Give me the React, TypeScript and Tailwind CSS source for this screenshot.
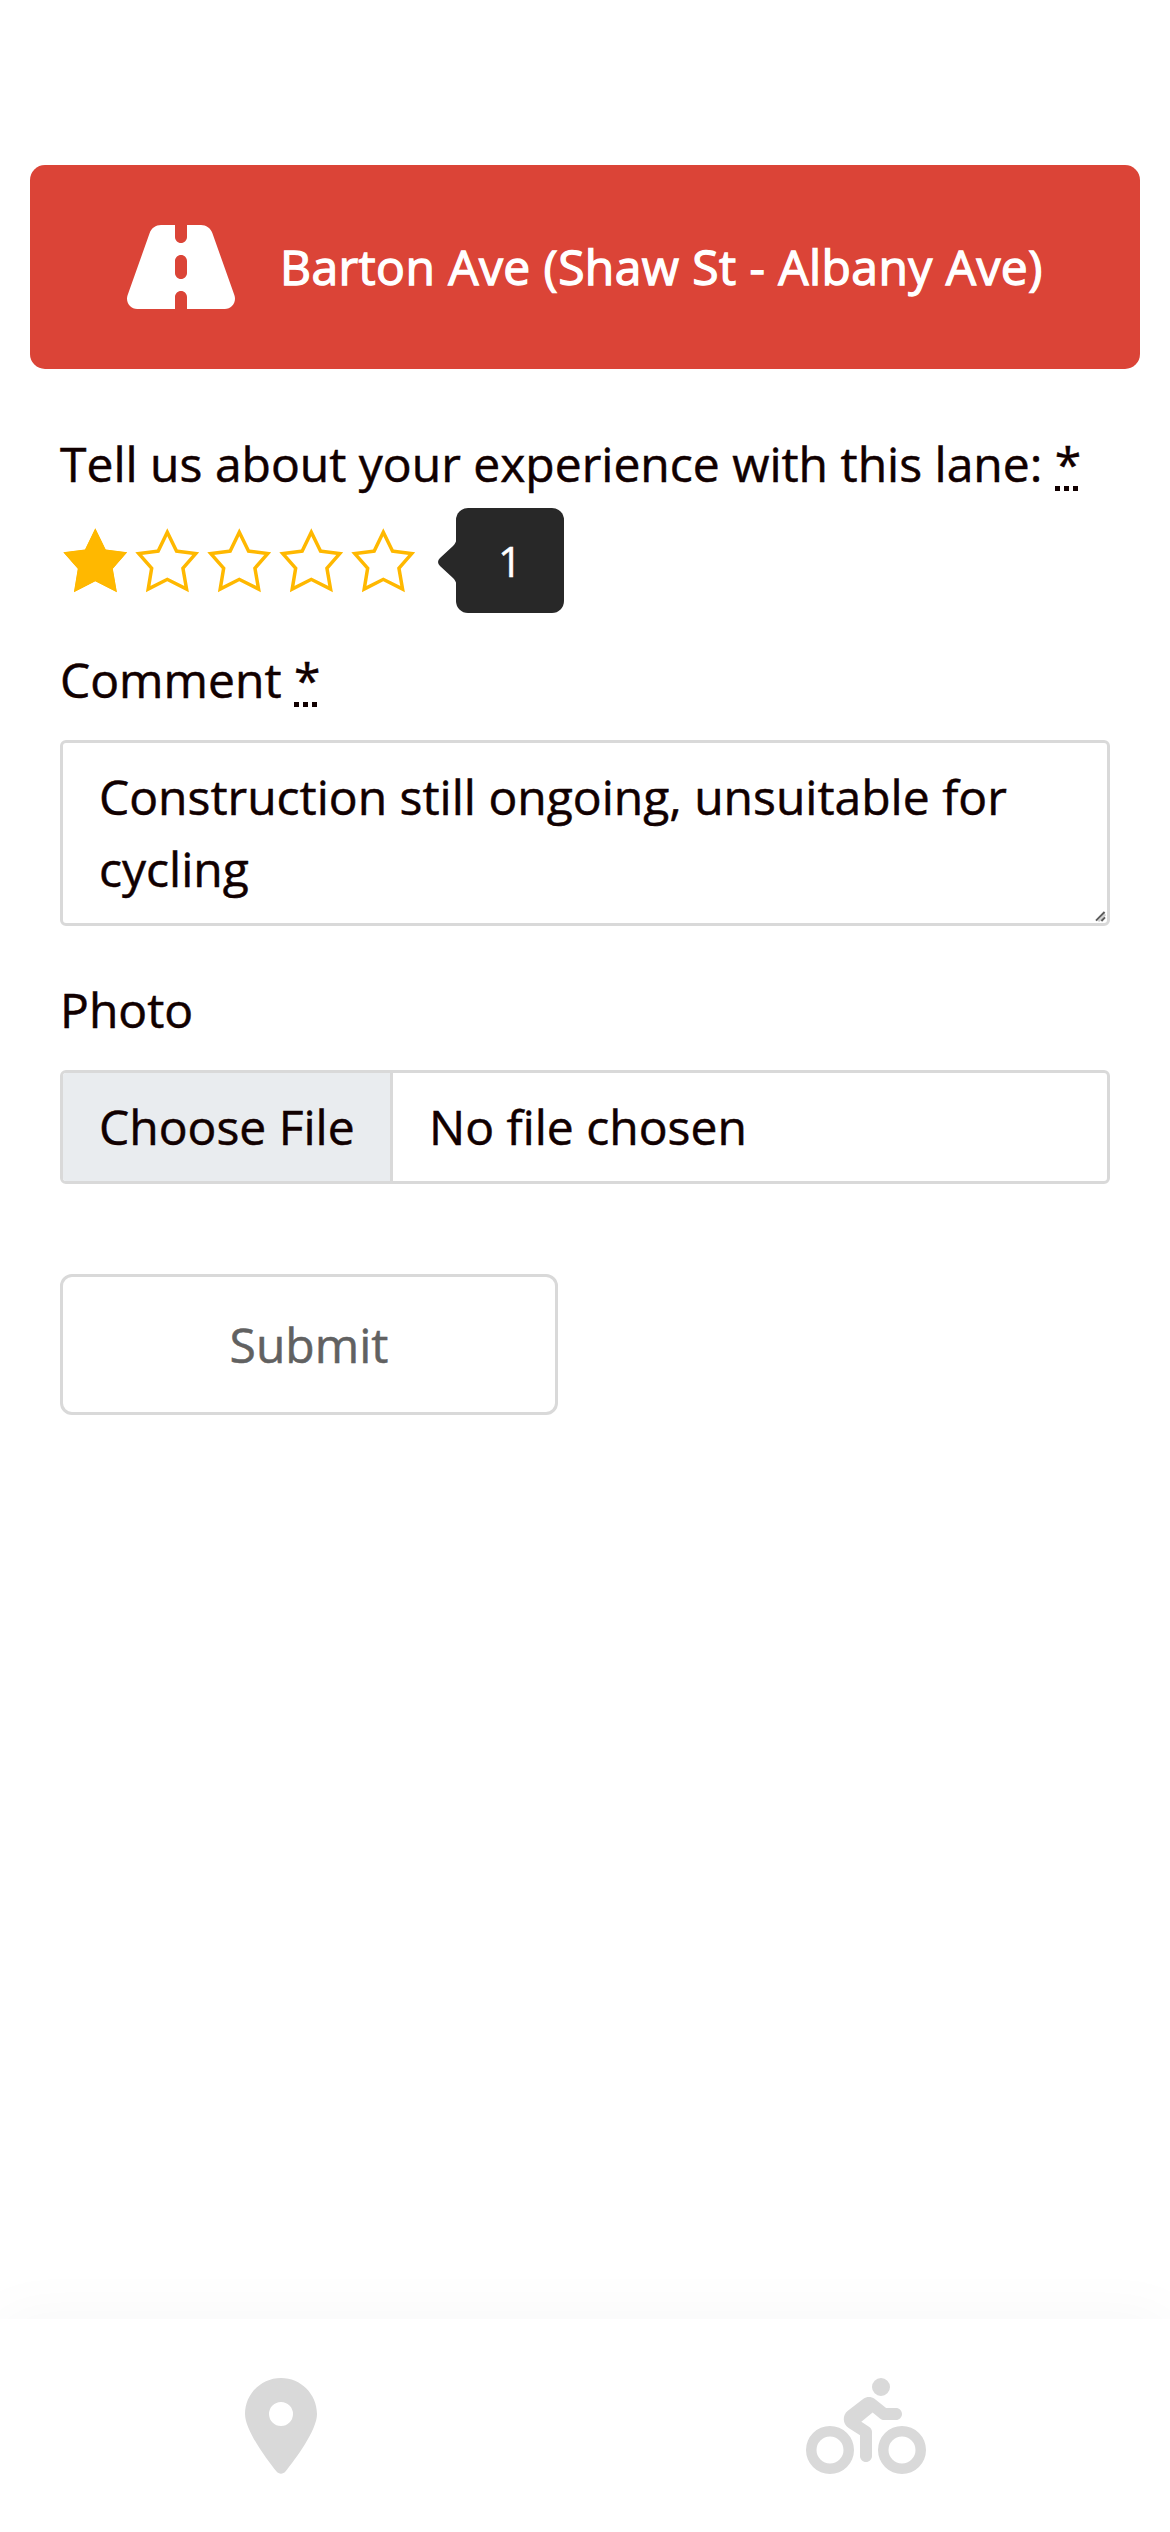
import React from "react";
import { FaRoad, FaLocationDot, FaPersonBiking } from "react-icons/fa6";

const STAR =
  "35.3,20.3 45.7,41.5 67.2,44.3 52.8,60.7 56.9,84.2 35.3,73.3 13.9,84.2 17.8,60.7 3.3,44.3 25,41.5";

function Star({ id, filled }: { id: string; filled: boolean }) {
  return (
    <svg width="72" height="105" viewBox="0 0 72 105" className="block shrink-0">
      <clipPath id={id}>
        <polygon points={STAR} />
      </clipPath>
      <polygon
        points={STAR}
        clipPath={`url(#${id})`}
        fill={filled ? "#ffb800" : "none"}
        stroke="#ffb800"
        strokeWidth="7"
      />
    </svg>
  );
}

function Required() {
  return (
    <abbr className="relative inline-block no-underline">
      *
      <span className="absolute bottom-[9px] left-0 flex gap-1">
        <span className="size-[5px] bg-[#110000]" />
        <span className="size-[5px] bg-[#110000]" />
        <span className="size-[5px] bg-[#110000]" />
      </span>
    </abbr>
  );
}

export default function App() {
  return (
    <div className="flex h-[2532px] w-[1170px] flex-col overflow-hidden bg-white font-['Open_Sans',sans-serif] text-[48px] leading-[72px] text-[#110000] [-webkit-text-stroke:0.5px]">
      <header className="mx-[30px] mt-[165px] flex h-[204px] shrink-0 items-center rounded-[15px] bg-[#db4437] pl-[97px] text-white">
        <FaRoad className="h-[96px] w-[108px] shrink-0" />
        <h1 className="ml-[45px] whitespace-nowrap font-medium tracking-[0.42px] [-webkit-text-stroke:1.3px]">
          Barton Ave (Shaw St - Albany Ave)
        </h1>
      </header>

      <form className="flex flex-col px-[60px] pt-[59px]">
        <label className="whitespace-nowrap">
          Tell us about your experience with this lane: <Required />
        </label>
        <div className="mt-2 flex h-[105px]">
          {[1, 2, 3, 4, 5].map((n) => (
            <Star key={n} id={`star-${n}`} filled={n === 1} />
          ))}
          <div className="relative ml-[36px] flex h-[105px] w-[108px] items-center justify-center rounded-[12px] bg-[#282828] text-[42px] text-white">
            <svg className="absolute -left-[18px] top-[30px]" width="19" height="48" viewBox="0 0 19 48" fill="#282828">
              <path d="M19 0C18 4 17 6 15 8L2 20Q-2 24 2 28L15 40C17 42 18 44 19 48Z" />
            </svg>
            1
          </div>
        </div>

        <label className="mt-[31px]">
          Comment <Required />
        </label>
        <div className="relative mt-6 h-[186px]">
          <textarea
            className="block h-[186px] w-full resize-none overflow-hidden rounded-[6px] border-[3px] border-[#d9d9d9] bg-white px-[36px] py-[18px]"
            defaultValue="Construction still ongoing, unsuitable for cycling"
          />
          <svg className="absolute bottom-[4px] right-[4px]" width="11" height="11" viewBox="0 0 11 11" strokeWidth="2">
            <path d="M3.4 10.4L10.4 3.4" stroke="#cfcfcf" />
            <path d="M1 9.6L9.6 1M6.4 10L10 6.4" stroke="#5c5c5c" />
          </svg>
        </div>

        <label className="mt-12">Photo</label>
        <div className="mt-6 flex h-[114px] items-stretch overflow-hidden rounded-[6px] border-[3px] border-[#d9d9d9]">
          <button type="button" className="w-[330px] shrink-0 whitespace-nowrap border-r-[3px] border-[#d9d9d9] bg-[#e9ecef] pl-[36px] text-left">
            Choose File
          </button>
          <span className="py-[18px] pl-[36px]">No file chosen</span>
        </div>

        <button type="button" className="mt-[90px] h-[141px] w-[498px] rounded-[12px] border-[3px] border-[#d9d9d9] text-[#616161]">
          Submit
        </button>
      </form>

      <nav className="mt-auto grid h-[213px] shrink-0 grid-cols-2 bg-white pt-[59px] text-[#d9d9d9] shadow-[0_0_60px_rgba(0,0,0,0.04)]">
        <div className="flex justify-center pr-6">
          <FaLocationDot className="h-[96px] w-[72px]" />
        </div>
        <div className="flex justify-center pr-6">
          <FaPersonBiking className="h-[96px] w-[120px]" />
        </div>
      </nav>
    </div>
  );
}
